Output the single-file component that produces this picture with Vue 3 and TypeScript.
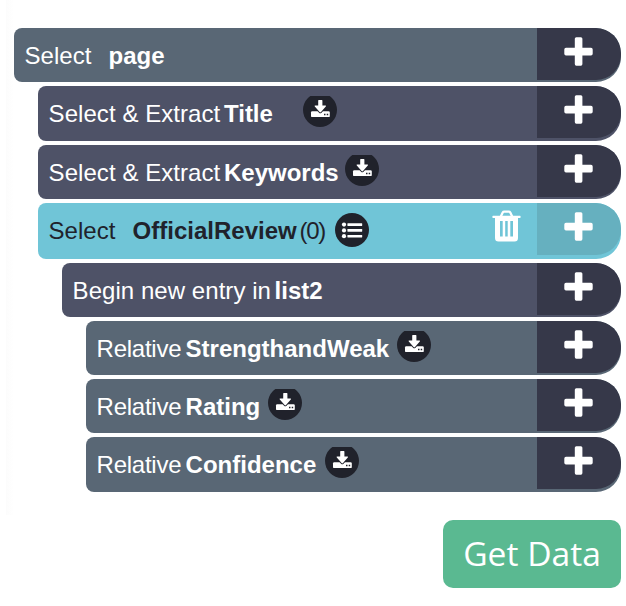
<script setup lang="ts">
interface Step {
  level: number
  height: number
  tone: 'slate' | 'indigo' | 'active'
  action: string
  actionWidth: number
  name: string
  nameWidth: number
  spacing: number
  count?: number
  badge?: 'download' | 'list'
}

const steps: Step[] = [
  { level: 0, height: 54, tone: 'slate', action: 'Select', actionWidth: 84, name: 'page', nameWidth: 60, spacing: 0 },
  { level: 1, height: 55, tone: 'indigo', action: 'Select & Extract', actionWidth: 175.4, name: 'Title', nameWidth: 79, spacing: 0.06, badge: 'download' },
  { level: 1, height: 54, tone: 'indigo', action: 'Select & Extract', actionWidth: 175.4, name: 'Keywords', nameWidth: 121, spacing: 0.06, badge: 'download' },
  { level: 1, height: 56, tone: 'active', action: 'Select', actionWidth: 84, name: 'OfficialReview', nameWidth: 167, spacing: 0, count: 0, badge: 'list' },
  { level: 2, height: 54, tone: 'indigo', action: 'Begin new entry in', actionWidth: 202, name: 'list2', nameWidth: 60, spacing: 0.05 },
  { level: 3, height: 54, tone: 'slate', action: 'Relative', actionWidth: 89, name: 'StrengthandWeak', nameWidth: 211, spacing: -0.25, badge: 'download' },
  { level: 3, height: 54, tone: 'slate', action: 'Relative', actionWidth: 89, name: 'Rating', nameWidth: 82, spacing: -0.25, badge: 'download' },
  { level: 3, height: 55, tone: 'slate', action: 'Relative', actionWidth: 89, name: 'Confidence', nameWidth: 139, spacing: -0.25, badge: 'download' },
]
</script>

<template>
  <main class="panel">
    <ul class="steps">
      <li
        v-for="step in steps"
        :key="step.name"
        class="step"
        :class="step.tone"
        :style="{ marginLeft: step.level * 24 + 'px', height: step.height + 'px' }"
      >
        <div class="label">
          <span class="action" :style="{ width: step.actionWidth + 'px', letterSpacing: step.spacing + 'px' }">{{ step.action }}</span>
          <strong class="name" :style="{ width: step.nameWidth + 'px' }">{{ step.name }}</strong>
          <span v-if="step.count !== undefined" class="count">({{ step.count }})</span>
          <svg v-if="step.badge === 'download'" class="badge" width="34" height="31" viewBox="0 0 34 31">
            <circle cx="17" cy="14" r="17" fill="#20222b" />
            <rect x="8" y="15.3" width="18.8" height="5.8" rx="1.2" fill="#fff" />
            <path
              fill="#fff"
              stroke="#20222b"
              stroke-width="1.6"
              paint-order="stroke"
              d="M15.8 4h3q.6 0 .6.6v5h2.900q1.300 0 .5 1l-4.800 5.500q-.7.7-1.400 0l-4.800-5.500q-.8-1 .5-1h2.900v-5q0-.6.6-.6z"
            />
            <path fill="#20222b" d="M21 17.800h1.500v1.500H21zM23.700 17.800h1.500v1.500h-1.500z" />
          </svg>
          <svg v-if="step.badge === 'list'" class="badge" width="34" height="34" viewBox="0 0 34 34">
            <circle cx="17" cy="17" r="17" fill="#20222b" />
            <g fill="#fff">
              <circle cx="9" cy="11.6" r="2.1" /><circle cx="9" cy="17.4" r="2.1" /><circle cx="9" cy="23.200" r="2.1" />
              <rect x="12.4" y="10.300" width="14.8" height="2.600" rx=".4" />
              <rect x="12.4" y="16.100" width="14.8" height="2.600" rx=".4" />
              <rect x="12.4" y="21.900" width="14.8" height="2.600" rx=".4" />
            </g>
          </svg>
        </div>
        <svg v-if="step.tone === 'active'" class="trash" width="29" height="32" viewBox="0 0 29 32">
          <path fill="none" stroke="#fff" stroke-width="2.3" d="M8.800 6.500 10.700 2.500q.5-.9 1.500-.9h4.600q1 0 1.500.9l1.900 4" />
          <path fill="#fff" d="M1 5.800h27q.6 0 .6.7v.8q0 .7-.6.7h-2v20q0 3.500-3.500 3.500h-16Q3 31.500 3 28V8H1q-.6 0-.6-.7v-.8q0-.7.6-.7z" />
          <path fill="#70c5d7" d="M8 11h2.700v15.500H8zM13.200 11h2.500v15.500h-2.500zM18.300 11h2.700v15.500h-2.700z" />
        </svg>
        <button class="add" aria-label="Add">
          <svg width="29" height="29" viewBox="0 0 29 29">
            <path fill="#fff" d="M12.300.3h4.600q1.500 0 1.500 1.500v8.900H27q1.700 0 1.700 1.700v4.300q0 1.700-1.700 1.700h-8.600V27q0 1.700-1.500 1.700h-4.600q-1.500 0-1.500-1.700v-8.600H2Q.3 18.400.3 16.700v-4.300q0-1.700 1.700-1.700h8.800V1.800q0-1.500 1.500-1.500z" />
          </svg>
        </button>
      </li>
    </ul>
    <button class="get-data">Get Data</button>
  </main>
</template>

<style>
body {
  margin: 0;
  background: #fff;
}
</style>

<style scoped>
.panel {
  box-sizing: border-box;
  width: 626px;
  height: 606px;
  padding: 28px 5px 0 14px;
  display: flex;
  flex-direction: column;
  align-items: flex-end;
  background: linear-gradient(90deg, #fcfcfc, #fff) 6px 0 / 8px 515px no-repeat #fff;
  font-family: "Liberation Sans", Arial, sans-serif;
}
.steps {
  width: 100%;
  margin: 0;
  padding: 0;
  list-style: none;
  display: flex;
  flex-direction: column;
  gap: 4px;
}
.step {
  display: flex;
  align-items: flex-start;
  overflow: hidden;
  border-radius: 8px 25px 25px 8px;
  color: #fff;
}
.slate { background: #596775; }
.indigo { background: #4e5267; }
.active { background: #70c5d7; color: #20222b; }
.label {
  flex: 1;
  min-width: 0;
  display: flex;
  align-items: flex-start;
  padding-left: 10.6px;
  font-size: 24px;
  line-height: 28px;
  white-space: nowrap;
}
.action, .name, .count {
  flex: none;
  padding-top: 14px;
}
.count {
  width: 35.4px;
  letter-spacing: -1.3px;
}
.badge {
  flex: none;
  margin-top: 10px;
}
.trash {
  flex: none;
  margin: 7px 16px 0 0;
}
.add {
  flex: none;
  width: 84px;
  height: 52px;
  padding: 9.4px 0 0 27.4px;
  border: 0;
  border-radius: 0 25px 25px 0;
  background: #363849;
  display: flex;
  align-items: flex-start;
}
.active .add { background: #66b0bf; }
.get-data {
  width: 178px;
  height: 68px;
  margin-top: 28px;
  padding: 0 0 1px;
  border: 0;
  border-radius: 10px;
  background: #5ab991;
  color: #fff;
  font: 33.6px/67px "Open Sans", "Noto Sans", sans-serif;
}
</style>
